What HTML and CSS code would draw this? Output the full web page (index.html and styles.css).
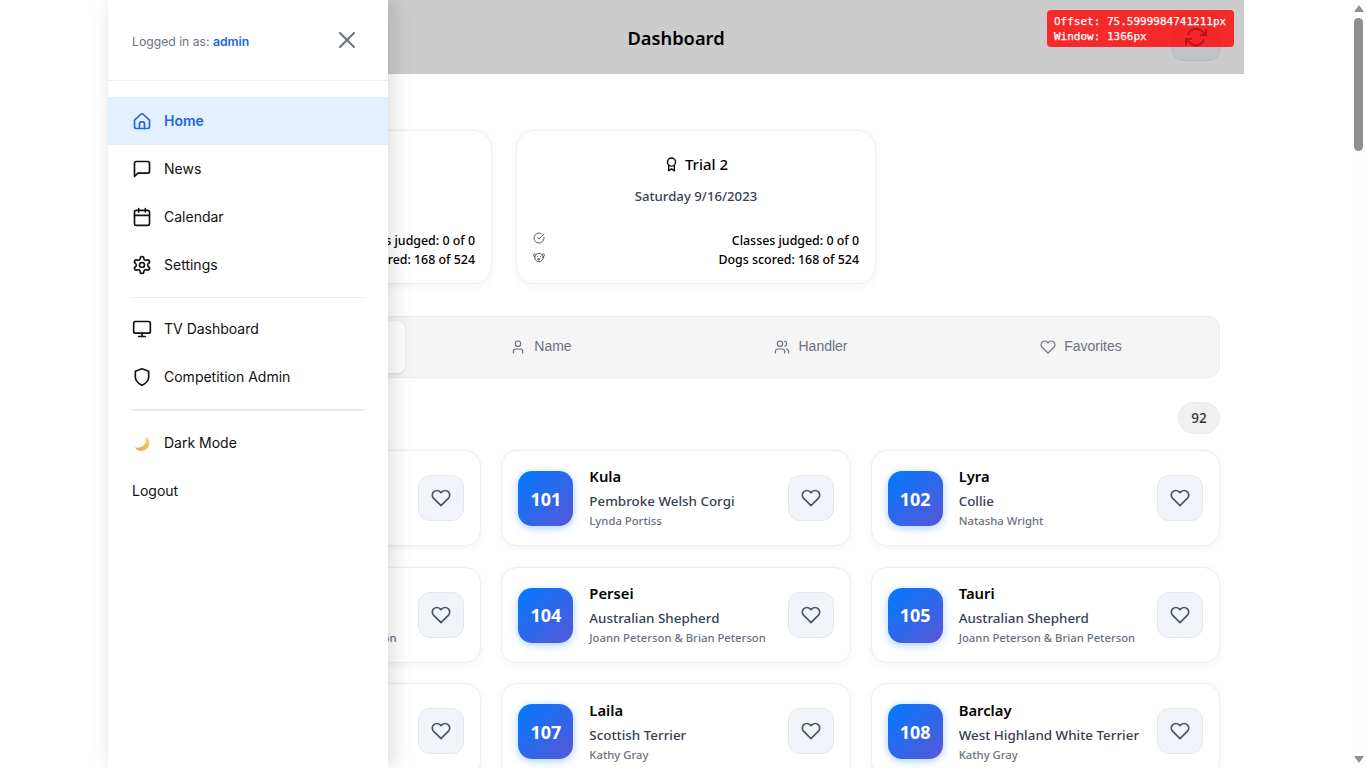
FILE: index.html
```html
<!DOCTYPE html>
<html lang="en">
<head>
  <meta charset="UTF-8">
  <meta name="viewport" content="width=device-width, initial-scale=1.0">
  <title>Dashboard</title>
  <link rel="stylesheet" href="styles.css">
</head>
<body>

  <!-- icon sprite -->
  <svg class="sprite" aria-hidden="true">
    <defs>
      <linearGradient id="moon-fill" x1="0.9" y1="0" x2="0.1" y2="1">
        <stop offset="0" stop-color="#fbd96a"/>
        <stop offset="1" stop-color="#f39a4e"/>
      </linearGradient>
    </defs>
    <symbol id="i-home" viewBox="0 0 24 24"><path d="M3 11 10.700 3.900a2 2 0 0 1 2.600 0L21 11v8a2 2 0 0 1-2 2H5a2 2 0 0 1-2-2z"/><path d="M9 21v-6a2 2 0 0 1 2-2h2a2 2 0 0 1 2 2v6"/></symbol>
    <symbol id="i-news" viewBox="0 0 24 24"><path d="M21 15a2 2 0 0 1-2 2H7l-4 4V5a2 2 0 0 1 2-2h14a2 2 0 0 1 2 2z"/></symbol>
    <symbol id="i-calendar" viewBox="0 0 24 24"><rect x="3" y="4" width="18" height="18" rx="2"/><path d="M16 2v4M8 2v4M3 10h18"/></symbol>
    <symbol id="i-settings" viewBox="0 0 24 24"><path d="M12.22 2h-.44a2 2 0 0 0-2 2v.18a2 2 0 0 1-1 1.73l-.43.25a2 2 0 0 1-2 0l-.15-.08a2 2 0 0 0-2.73.73l-.22.38a2 2 0 0 0 .73 2.73l.15.1a2 2 0 0 1 1 1.72v.51a2 2 0 0 1-1 1.74l-.15.09a2 2 0 0 0-.73 2.73l.22.38a2 2 0 0 0 2.73.73l.15-.08a2 2 0 0 1 2 0l.43.25a2 2 0 0 1 1 1.73V20a2 2 0 0 0 2 2h.44a2 2 0 0 0 2-2v-.18a2 2 0 0 1 1-1.73l.43-.25a2 2 0 0 1 2 0l.15.08a2 2 0 0 0 2.73-.73l.22-.39a2 2 0 0 0-.73-2.730l-.15-.08a2 2 0 0 1-1-1.74v-.5a2 2 0 0 1 1-1.74l.15-.09a2 2 0 0 0 .73-2.73l-.22-.38a2 2 0 0 0-2.73-.73l-.15.08a2 2 0 0 1-2 0l-.43-.25a2 2 0 0 1-1-1.73V4a2 2 0 0 0-2-2z"/><circle cx="12" cy="12" r="3"/></symbol>
    <symbol id="i-monitor" viewBox="0 0 24 24"><rect x="2" y="3" width="20" height="14" rx="2"/><path d="M8 21h8M12 17v4"/></symbol>
    <symbol id="i-shield" viewBox="0 0 24 24"><path d="M12 22s8-4 8-10V5l-8-3-8 3v7c0 6 8 10 8 10z"/></symbol>
    <symbol id="i-close" viewBox="0 0 24 24"><path d="M18 6 6 18M6 6l12 12"/></symbol>
    <symbol id="i-refresh" viewBox="0 0 24 24"><path d="M23 4v6h-6M1 20v-6h6"/><path d="M3.51 9a9 9 0 0 1 14.85-3.36L23 10M1 14l4.64 4.36A9 9 0 0 0 20.49 15"/></symbol>
    <symbol id="i-award" viewBox="0 0 24 24"><circle cx="12" cy="8" r="6.500"/><path d="M7.500 13.500V22l4.500-3 4.500 3v-8.500"/></symbol>
    <symbol id="i-check" viewBox="0 0 24 24"><path d="M22 11.08V12a10 10 0 1 1-5.93-9.14"/><path d="M22 4 12 14.01l-3-3"/></symbol>
    <symbol id="i-dog" viewBox="0 0 24 24"><circle cx="12" cy="13" r="8.500"/><path d="M5 8C3 3 1 5 1.500 9c.2 2 1.500 3 2.500 3M19 8c2-5 4-3 3.500 1-.2 2-1.500 3-2.500 3"/><path d="M9 11v.5M15 11v.5M10 15.500h4L12 18z"/></symbol>
    <symbol id="i-user" viewBox="0 0 24 24"><path d="M19 21v-2a4 4 0 0 0-4-4H9a4 4 0 0 0-4 4v2"/><circle cx="12" cy="7" r="4"/></symbol>
    <symbol id="i-users" viewBox="0 0 24 24"><path d="M16 21v-2a4 4 0 0 0-4-4H6a4 4 0 0 0-4 4v2"/><circle cx="9" cy="7" r="4"/><path d="M22 21v-2a4 4 0 0 0-3-3.87M16 3.13a4 4 0 0 1 0 7.75"/></symbol>
    <symbol id="i-heart" viewBox="0 0 24 24"><path d="M20.84 4.61a5.5 5.5 0 0 0-7.78 0L12 5.67l-1.06-1.06a5.5 5.5 0 0 0-7.78 7.78l1.06 1.06L12 21.23l7.78-7.78 1.06-1.06a5.5 5.5 0 0 0 0-7.78z"/></symbol>
  </svg>

  <div class="app">

    <header class="topbar">
      <h1>Dashboard</h1>
      <button class="refresh-btn"><svg class="icon icon-refresh"><use href="#i-refresh"/></svg></button>
    </header>

    <main class="content">
      <section class="trials">
        <div class="trial-card">
          <h2><svg class="icon icon-award"><use href="#i-award"/></svg> Trial 1</h2>
          <p class="trial-date">Saturday 9/16/2023</p>
          <div class="trial-stats">
            <div class="stat"><svg class="icon icon-stat"><use href="#i-check"/></svg><span>Classes judged: 0 of 0</span></div>
            <div class="stat"><svg class="icon icon-stat"><use href="#i-dog"/></svg><span>Dogs scored: 168 of 524</span></div>
          </div>
        </div>
        <div class="trial-card">
          <h2><svg class="icon icon-award"><use href="#i-award"/></svg> Trial 2</h2>
          <p class="trial-date">Saturday 9/16/2023</p>
          <div class="trial-stats">
            <div class="stat"><svg class="icon icon-stat"><use href="#i-check"/></svg><span>Classes judged: 0 of 0</span></div>
            <div class="stat"><svg class="icon icon-stat"><use href="#i-dog"/></svg><span>Dogs scored: 168 of 524</span></div>
          </div>
        </div>
      </section>

      <nav class="tabs">
        <button class="tab active"><span>Armband</span></button>
        <button class="tab"><svg class="icon icon-tab"><use href="#i-user"/></svg><span>Name</span></button>
        <button class="tab"><svg class="icon icon-tab"><use href="#i-users"/></svg><span>Handler</span></button>
        <button class="tab"><svg class="icon icon-tab"><use href="#i-heart"/></svg><span>Favorites</span></button>
      </nav>

      <div class="count-row">
        <span class="count">92</span>
      </div>

      <section class="dog-grid">
        <article class="dog-card">
          <div class="armband">100</div>
          <div class="dog-info"><h3>Luna</h3><p class="breed">Border Collie</p><p class="handler">Lynda Portiss</p></div>
          <button class="fav-btn"><svg class="icon icon-heart"><use href="#i-heart"/></svg></button>
        </article>
        <article class="dog-card">
          <div class="armband">101</div>
          <div class="dog-info"><h3>Kula</h3><p class="breed">Pembroke Welsh Corgi</p><p class="handler">Lynda Portiss</p></div>
          <button class="fav-btn"><svg class="icon icon-heart"><use href="#i-heart"/></svg></button>
        </article>
        <article class="dog-card">
          <div class="armband">102</div>
          <div class="dog-info"><h3>Lyra</h3><p class="breed">Collie</p><p class="handler">Natasha Wright</p></div>
          <button class="fav-btn"><svg class="icon icon-heart"><use href="#i-heart"/></svg></button>
        </article>
        <article class="dog-card">
          <div class="armband">103</div>
          <div class="dog-info"><h3>Vega</h3><p class="breed">Australian Shepherd</p><p class="handler">Joann Peterson &amp; Brian Peterson</p></div>
          <button class="fav-btn"><svg class="icon icon-heart"><use href="#i-heart"/></svg></button>
        </article>
        <article class="dog-card">
          <div class="armband">104</div>
          <div class="dog-info"><h3>Persei</h3><p class="breed">Australian Shepherd</p><p class="handler">Joann Peterson &amp; Brian Peterson</p></div>
          <button class="fav-btn"><svg class="icon icon-heart"><use href="#i-heart"/></svg></button>
        </article>
        <article class="dog-card">
          <div class="armband">105</div>
          <div class="dog-info"><h3>Tauri</h3><p class="breed">Australian Shepherd</p><p class="handler">Joann Peterson &amp; Brian Peterson</p></div>
          <button class="fav-btn"><svg class="icon icon-heart"><use href="#i-heart"/></svg></button>
        </article>
        <article class="dog-card">
          <div class="armband">106</div>
          <div class="dog-info"><h3>Skye</h3><p class="breed">Scottish Terrier</p><p class="handler">Kathy Gray</p></div>
          <button class="fav-btn"><svg class="icon icon-heart"><use href="#i-heart"/></svg></button>
        </article>
        <article class="dog-card">
          <div class="armband">107</div>
          <div class="dog-info"><h3>Laila</h3><p class="breed">Scottish Terrier</p><p class="handler">Kathy Gray</p></div>
          <button class="fav-btn"><svg class="icon icon-heart"><use href="#i-heart"/></svg></button>
        </article>
        <article class="dog-card">
          <div class="armband">108</div>
          <div class="dog-info"><h3>Barclay</h3><p class="breed">West Highland White Terrier</p><p class="handler">Kathy Gray</p></div>
          <button class="fav-btn"><svg class="icon icon-heart"><use href="#i-heart"/></svg></button>
        </article>
      </section>
    </main>

    <!-- open side menu, lies over the page -->
    <aside class="sidebar">
      <div class="sidebar-head">
        <span class="logged-in">Logged in as: <strong>admin</strong></span>
        <button class="close-btn"><svg class="icon icon-close"><use href="#i-close"/></svg></button>
      </div>
      <ul class="menu">
        <li class="menu-item active"><svg class="icon icon-menu"><use href="#i-home"/></svg>Home</li>
        <li class="menu-item"><svg class="icon icon-menu"><use href="#i-news"/></svg>News</li>
        <li class="menu-item"><svg class="icon icon-menu"><use href="#i-calendar"/></svg>Calendar</li>
        <li class="menu-item"><svg class="icon icon-menu"><use href="#i-settings"/></svg>Settings</li>
        <li class="menu-divider"></li>
        <li class="menu-item"><svg class="icon icon-menu"><use href="#i-monitor"/></svg>TV Dashboard</li>
        <li class="menu-item"><svg class="icon icon-menu"><use href="#i-shield"/></svg>Competition Admin</li>
        <li class="menu-divider thick"></li>
        <li class="menu-item">
          <svg class="icon-moon" viewBox="0 0 20 20"><path d="M14 3.500C16.500 5 17.800 8 17.500 10.500 17 15 13 18 9 17.800 6.500 17.700 4 16.300 3 14.300c2.500.7 5.500.4 7.800-1.300C13.500 11 14.800 7.500 14 3.500z"/></svg>
          Dark Mode
        </li>
        <li class="menu-item">Logout</li>
      </ul>
    </aside>

    <!-- debug box left on in the page -->
    <div class="debug">Offset: 75.5999984741211px<br>Window: 1366px</div>
  </div>

  <!-- browser scrollbar as seen in the page -->
  <div class="scrollbar">
    <span class="arrow-up"></span>
    <span class="thumb"></span>
    <span class="arrow-down"></span>
  </div>

</body>
</html>
```

FILE: styles.css
```css
* {
  box-sizing: border-box;
}

html {
  background: #fff;
}

body {
  margin: 0;
  font-family: "Noto Sans", "Open Sans", sans-serif;
  color: #000;
  background: #fff;
}

h1, h2, h3, p, ul {
  margin: 0;
  padding: 0;
}

button {
  font-family: "Liberation Sans", Arial, sans-serif;
  border: none;
  background: none;
  padding: 0;
}

.sprite {
  position: absolute;
  width: 0;
  height: 0;
}

.icon {
  fill: none;
  stroke: currentColor;
  stroke-width: 2;
  stroke-linecap: round;
  stroke-linejoin: round;
  flex-shrink: 0;
}

/* page column */
.app {
  position: relative;
  width: 1136px;
  margin-left: 108px;
}

.topbar {
  height: 74px;
  display: flex;
  align-items: center;
  justify-content: center;
  position: relative;
  background: #cccccc;
  border-bottom: 1px solid #c9c9c9;
}

.topbar h1 {
  margin-top: 2px;
  font-size: 18.300px;
  font-weight: 600;
  color: #000;
}

.refresh-btn {
  position: absolute;
  top: 13px;
  right: 23px;
  width: 50px;
  height: 48px;
  display: flex;
  align-items: center;
  justify-content: center;
  background: #bfc3c7;
  border: 1px solid #b8bcc0;
  border-radius: 12px;
  color: #bd1016;
}

.icon-refresh {
  width: 22px;
  height: 22px;
  position: relative;
  z-index: 3;
}

.content {
  padding: 56px 24px 24px;
}

/* trials */
.trials {
  display: flex;
  gap: 24px;
}

.trial-card {
  width: 360px;
  height: 154px;
  padding: 23px 16px 14px;
  background: #fff;
  border: 1px solid #eeeeee;
  border-radius: 18px;
  box-shadow: 0 2px 8px rgba(0, 0, 0, 0.05);
  display: flex;
  flex-direction: column;
}

.trial-card h2 {
  display: flex;
  align-items: center;
  justify-content: center;
  gap: 6px;
  font-size: 15px;
  font-weight: 500;
  line-height: 20px;
}

.icon-award {
  width: 15px;
  height: 15px;
  stroke-width: 2.200;
}

.trial-date {
  margin-top: 12px;
  text-align: center;
  font-size: 13.200px;
  font-weight: 500;
  line-height: 20px;
  color: #374151;
}

.trial-stats {
  margin-top: auto;
  display: flex;
  flex-direction: column;
  gap: 1px;
}

.stat {
  display: flex;
  justify-content: space-between;
  align-items: flex-start;
  font-size: 12.400px;
  font-weight: 500;
  line-height: 18px;
}

.icon-stat {
  width: 12px;
  height: 12px;
  color: #374151;
  stroke-width: 1.700;
}

/* tabs */
.tabs {
  display: flex;
  gap: 2px;
  height: 62px;
  margin-top: 32px;
  padding: 4px;
  background: #f5f5f5;
  border: 1px solid #ebebeb;
  border-radius: 12px;
}

.tab {
  flex: 1;
  display: flex;
  align-items: center;
  justify-content: center;
  gap: 8px;
  padding-bottom: 3px;
  font-size: 14px;
  color: #6b7280;
  border-radius: 8px;
}

.tab.active {
  background: #fff;
  box-shadow: 0 1px 3px rgba(0, 0, 0, 0.1);
}

.icon-tab {
  width: 16px;
  height: 16px;
  stroke-width: 1.800;
  margin-top: 2px;
}

.count-row {
  display: flex;
  justify-content: flex-end;
  margin-top: 24px;
}

.count {
  width: 42px;
  height: 32px;
  display: flex;
  align-items: center;
  justify-content: center;
  border-radius: 16px;
  background: #f0f0f0;
  border: 1px solid #ebebeb;
  font-size: 13.500px;
  font-weight: 500;
  color: #333;
}

/* dog list */
.dog-grid {
  display: grid;
  grid-template-columns: repeat(3, 1fr);
  gap: 20.700px 20px;
  margin-top: 16px;
}

.dog-card {
  height: 96px;
  padding: 0 16px;
  display: flex;
  align-items: center;
  gap: 16px;
  background: #fff;
  border: 1px solid #eeeeee;
  border-radius: 16px;
  box-shadow: 0 2px 8px rgba(0, 0, 0, 0.05);
}

.armband {
  width: 55px;
  height: 55px;
  margin-top: 1px;
  flex-shrink: 0;
  display: flex;
  align-items: center;
  justify-content: center;
  border-radius: 14px;
  background: linear-gradient(135deg, #007aff, #5856d6);
  box-shadow: 0 2px 8px rgba(0, 122, 255, 0.35);
  color: #fff;
  font-size: 18px;
  font-weight: 700;
}

.dog-info {
  flex: 1;
  min-width: 0;
  padding-bottom: 1.500px;
}

.dog-info h3 {
  font-size: 14.800px;
  font-weight: 600;
  line-height: 22px;
}

.breed {
  margin-top: 4px;
  font-size: 13.400px;
  font-weight: 500;
  line-height: 20px;
  color: #374151;
  white-space: nowrap;
}

.handler {
  margin-top: 2px;
  font-size: 11.300px;
  font-weight: 500;
  line-height: 16px;
  color: #6b7280;
  white-space: nowrap;
}

.fav-btn {
  width: 46px;
  height: 46px;
  flex-shrink: 0;
  display: flex;
  align-items: center;
  justify-content: center;
  background: #f1f5f9;
  border: 1px solid #e5e7eb;
  border-radius: 12px;
  color: #4b5563;
}

.icon-heart {
  width: 20px;
  height: 20px;
}

/* side menu */
.sidebar {
  position: absolute;
  top: 0;
  left: 0;
  width: 280px;
  height: 100vh;
  background: #fff;
  box-shadow: 4px 0 20px rgba(0, 0, 0, 0.15);
  font-family: Inter, "Liberation Sans", sans-serif;
}

.sidebar-head {
  height: 81px;
  padding: 0 24px;
  display: flex;
  align-items: center;
  justify-content: space-between;
  border-bottom: 1px solid #eef0f3;
}

.logged-in {
  margin-top: 2px;
  font-size: 12.200px;
  color: #6b7280;
}

.logged-in strong {
  font-weight: 600;
  color: #2563eb;
}

.close-btn {
  width: 28px;
  height: 28px;
  color: #6b7280;
  margin-right: 3px;
}

.icon-close {
  width: 28px;
  height: 28px;
  stroke-width: 1.800;
}

.menu {
  list-style: none;
  padding-top: 16px;
}

.menu-item {
  height: 48px;
  padding: 0 24px 2px;
  display: flex;
  align-items: center;
  gap: 12px;
  font-size: 14px;
  color: #111;
}

.menu-item.active {
  background: #e3f0fd;
  color: #2563eb;
  font-weight: 600;
}

.icon-menu {
  width: 20px;
  height: 20px;
  margin-top: 2px;
}

.menu-divider {
  height: 1px;
  margin: 8px 24px 7px;
  background: #eeeeee;
}

.menu-divider.thick {
  height: 2px;
  margin-bottom: 8px;
  background: #e8e8ec;
}

.icon-moon {
  width: 20px;
  height: 20px;
  flex-shrink: 0;
  margin-top: 2px;
  fill: url(#moon-fill);
}

/* debug box */
.debug {
  position: absolute;
  z-index: 2;
  top: 10px;
  right: 10px;
  width: 187px;
  height: 37px;
  padding: 4px 7px;
  background: rgba(255, 0, 0, 0.8);
  border-radius: 4px;
  color: #fff;
  font-family: "DejaVu Sans Mono", "Liberation Mono", monospace;
  font-size: 11px;
  line-height: 15px;
  white-space: nowrap;
  -webkit-text-stroke: 0.25px #fff;
}

/* scrollbar */
.scrollbar {
  position: fixed;
  top: 0;
  right: 0;
  bottom: 0;
  width: 15px;
  padding: 5px 2px;
  display: flex;
  flex-direction: column;
  align-items: center;
  background: #fdfdfd;
}

.arrow-up,
.arrow-down {
  width: 0;
  height: 0;
  border-left: 5px solid transparent;
  border-right: 5px solid transparent;
}

.arrow-up {
  border-bottom: 7px solid #8f8f8f;
}

.arrow-down {
  margin-top: auto;
  border-top: 7px solid #8f8f8f;
}

.thumb {
  width: 9px;
  height: 133px;
  margin-top: 6px;
  border-radius: 5px;
  background: #8f8f8f;
}
```
